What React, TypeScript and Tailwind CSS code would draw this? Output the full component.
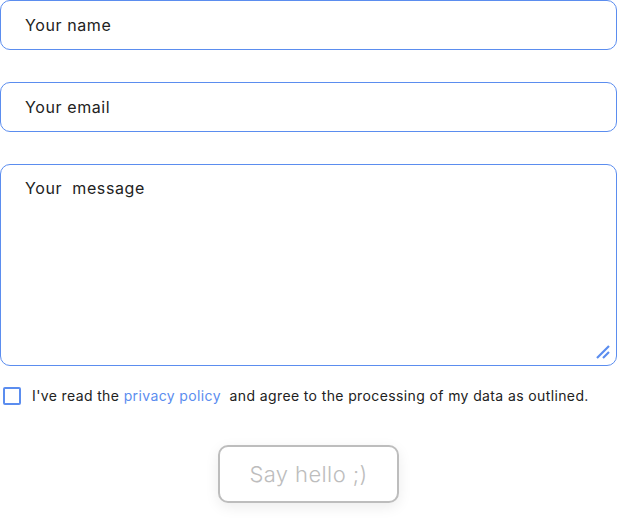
import React, { useState } from 'react';

const fieldClass =
    'w-full border border-[#5b8def] rounded-[10px] bg-white px-6 text-[16px] tracking-[0.6px] text-[#222] placeholder:text-[#222] outline-none';

const App: React.FC = () => {
    const [name, setName] = useState('');
    const [email, setEmail] = useState('');
    const [message, setMessage] = useState('');
    const [agreed, setAgreed] = useState(false);

    return (
        <div className="w-[617px] h-[524px] bg-white font-['Inter',sans-serif]">
            <form className="flex flex-col" onSubmit={e => e.preventDefault()}>
                <input
                    type="text"
                    placeholder="Your name"
                    value={name}
                    onChange={e => setName(e.target.value)}
                    className={`${fieldClass} h-[50px]`}
                />
                <input
                    type="email"
                    placeholder="Your email"
                    value={email}
                    onChange={e => setEmail(e.target.value)}
                    className={`${fieldClass} h-[50px] mt-[32px]`}
                />
                <div className="relative mt-[32px]">
                    <textarea
                        placeholder="Your  message"
                        value={message}
                        onChange={e => setMessage(e.target.value)}
                        className={`${fieldClass} h-[202px] pt-[11px] resize-none block`}
                    />
                    {/* custom resize grip */}
                    <svg className="absolute right-[7px] bottom-[7px]" width="14" height="14" viewBox="0 0 14 14">
                        <path d="M13 1 L1 13 M13 7 L7 13" stroke="#5b8def" strokeWidth="2.2" />
                    </svg>
                </div>

                <label className="flex items-center mt-[19px] ml-[3px] text-[14px] tracking-[0.38px] text-[#222] cursor-pointer">
                    <input
                        type="checkbox"
                        checked={agreed}
                        onChange={e => setAgreed(e.target.checked)}
                        className="appearance-none w-[18px] h-[18px] border-2 border-[#5b8def] rounded-[2px] mr-[11px] checked:bg-[#5b8def]"
                    />
                    <span>
                        I've read the <a href="#" className="text-[#5b8def]">privacy policy</a>&nbsp; and agree to the processing of my data as outlined.
                    </span>
                </label>

                <div className="flex justify-center mt-[39px]">
                    <button
                        type="submit"
                        className="w-[181px] h-[58px] border-2 border-[#bdbdbd] rounded-[10px] text-[22px] tracking-[0.4px] font-light text-[#bdbdbd] shadow-[0_4px_14px_rgba(0,0,0,0.08)] bg-white"
                    >
                        Say hello ;)
                    </button>
                </div>
            </form>
        </div>
    );
};

export default App;
